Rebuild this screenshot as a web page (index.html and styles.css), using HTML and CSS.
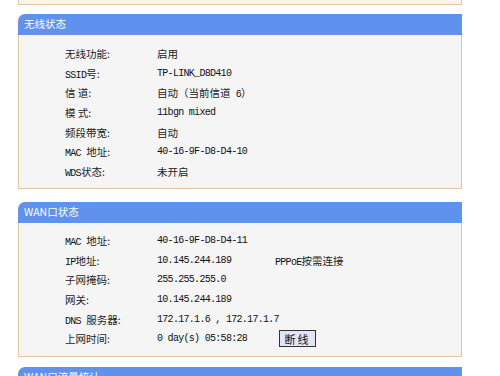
FILE: index.html
```html
<!DOCTYPE html>
<html lang="zh-CN">
<head>
  <meta charset="UTF-8">
  <title>运行状态</title>
  <link rel="stylesheet" href="styles.css">
</head>
<body>
  <div class="page">
    <div class="panel panel-top"></div>

    <div class="panel panel-wl">
      <div class="panel-head">无线状态</div>
      <div class="panel-body">
        <div class="row"><span class="lbl zh">无线功能:</span><span class="val zh">启用</span></div>
        <div class="row"><span class="lbl">SSID<span class="zh">号:</span></span><span class="val">TP-LINK_D8D410</span></div>
        <div class="row"><span class="lbl zh">信 道:</span><span class="val"><span class="zh">自动（当前信道</span> 6<span class="zh">）</span></span></div>
        <div class="row"><span class="lbl zh">模 式:</span><span class="val">11bgn mixed</span></div>
        <div class="row"><span class="lbl zh">频段带宽:</span><span class="val zh">自动</span></div>
        <div class="row"><span class="lbl">MAC <span class="zh">地址:</span></span><span class="val">40-16-9F-D8-D4-10</span></div>
        <div class="row"><span class="lbl">WDS<span class="zh">状态:</span></span><span class="val zh">未开启</span></div>
      </div>
    </div>

    <div class="panel panel-wan">
      <div class="panel-head">WAN口状态</div>
      <div class="panel-body">
        <div class="row"><span class="lbl">MAC <span class="zh">地址:</span></span><span class="val">40-16-9F-D8-D4-11</span></div>
        <div class="row"><span class="lbl">IP<span class="zh">地址:</span></span><span class="val">10.145.244.189</span><span class="extra">PPPoE<span class="zh">按需连接</span></span></div>
        <div class="row"><span class="lbl zh">子网掩码:</span><span class="val">255.255.255.0</span></div>
        <div class="row"><span class="lbl zh">网关:</span><span class="val">10.145.244.189</span></div>
        <div class="row"><span class="lbl">DNS <span class="zh">服务器:</span></span><span class="val">172.17.1.6 , 172.17.1.7</span></div>
        <div class="row"><span class="lbl zh">上网时间:</span><span class="val">0 day(s) 05:58:28</span><span class="extra"><button class="btn">断线</button></span></div>
      </div>
    </div>

    <div class="panel">
      <div class="panel-head">WAN口流量统计</div>
      <div class="panel-body"></div>
    </div>
  </div>
</body>
</html>
```

FILE: styles.css
```css
body {
  margin: 0;
  background: #fff;
  font-family: "Liberation Mono", "Noto Sans CJK SC", monospace;
  font-size: 10px;
  letter-spacing: -0.7px;
  color: #111;
}

.page {
  width: 444px;
  margin-left: 18px;
}

.panel-top {
  height: 4px;
  background: #fdf4ea;
  border: 1px solid #e0c6a2;
  border-top: none;
  margin-bottom: 9px;
}

.panel-head {
  height: 21px;
  line-height: 20px;
  background: #5f92ef;
  color: #fff;
  padding-left: 6px;
  border-top-left-radius: 7px;
  font-family: "Noto Sans CJK SC", sans-serif;
  font-size: 10.5px;
  letter-spacing: 0;
}

.panel-body {
  background: #f5f5f5;
  border: 1px solid #e0c6a2;
  border-top: none;
}

.panel-wl {
  margin-bottom: 13px;
}

.panel-wl .panel-body {
  padding: 9px 0 6px 0;
}

.panel-wan {
  margin-bottom: 10px;
}

.panel-wan .panel-body {
  padding: 8px 0 7px 0;
}

.row {
  display: flex;
  height: 19.7px;
  line-height: 19.7px;
  padding-left: 46px;
  white-space: nowrap;
}

.lbl {
  width: 92px;
  flex: none;
}

.val {
  width: 118px;
  flex: none;
}

.zh {
  font-family: "Noto Sans CJK SC", sans-serif;
  font-size: 10.5px;
  letter-spacing: 0;
  color: #222;
}

.btn {
  margin-left: 4px;
  width: 37px;
  height: 17px;
  padding: 0;
  vertical-align: middle;
  background: #e4e4f4;
  border: 1px solid #333;
  font-family: "Noto Sans CJK SC", sans-serif;
  font-size: 11px;
  letter-spacing: 2px;
  line-height: 14px;
  color: #111;
}
```
